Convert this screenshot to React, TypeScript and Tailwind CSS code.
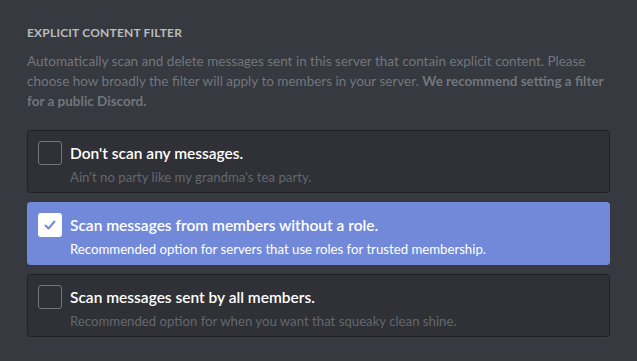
import React, { useState } from 'react';

interface FilterOption {
  id: string;
  title: string;
  description: string;
}

const options: FilterOption[] = [
  {
    id: 'none',
    title: "Don't scan any messages.",
    description: "Ain't no party like my grandma's tea party.",
  },
  {
    id: 'no-role',
    title: 'Scan messages from members without a role.',
    description: 'Recommended option for servers that use roles for trusted membership.',
  },
  {
    id: 'all',
    title: 'Scan messages sent by all members.',
    description: 'Recommended option for when you want that squeaky clean shine.',
  },
];

const Checkbox: React.FC<{ checked: boolean }> = ({ checked }) => (
  <div
    className={`w-6 h-6 shrink-0 rounded-[3px] flex items-center justify-center ${
      checked ? 'bg-white' : 'border border-[#72767d]'
    }`}
  >
    {checked && (
      <svg width="14" height="14" viewBox="0 0 14 14" fill="none">
        <polyline
          points="2.5,7.5 5.5,10.5 11.5,3.5"
          stroke="#7289da"
          strokeWidth="2"
          strokeLinecap="round"
          strokeLinejoin="round"
        />
      </svg>
    )}
  </div>
);

const App: React.FC = () => {
  const [selected, setSelected] = useState<string>('no-role');

  return (
    <div
      className="w-[637px] h-[361px] bg-[#36393f] px-[27px] pt-[25px]"
      style={{ fontFamily: 'Lato, "Open Sans", sans-serif' }}
    >
      <h5 className="text-[12px] leading-4 font-bold uppercase tracking-[0.2px] text-[#b9bbbe]">
        Explicit Content Filter
      </h5>
      <p className="mt-[10px] text-[13.5px] leading-5 text-[#72767d]">
        Automatically scan and delete messages sent in this server that contain explicit content. Please
        <br />
        choose how broadly the filter will apply to members in your server.{' '}
        <strong className="font-bold">
          We recommend setting a filter
          <br />
          for a public Discord.
        </strong>
      </p>

      <div className="mt-[19px] flex flex-col gap-[9px]">
        {options.map((opt) => {
          const isChecked = selected === opt.id;
          return (
            <div
              key={opt.id}
              onClick={() => setSelected(opt.id)}
              className={`h-[63px] rounded-[3px] border flex items-start gap-2 px-[10px] pt-[10px] cursor-pointer ${
                isChecked ? 'bg-[#7289da] border-[#7289da]' : 'bg-[#2f3136] border-[#202225]'
              }`}
            >
              <Checkbox checked={isChecked} />
              <div className="flex flex-col">
                <div className="text-[15.5px] leading-6 font-semibold text-white">{opt.title}</div>
                <div
                  className={`mt-[2px] text-[13.2px] leading-5 ${
                    isChecked ? 'text-white' : 'text-[#64676d]'
                  }`}
                >
                  {opt.description}
                </div>
              </div>
            </div>
          );
        })}
      </div>
    </div>
  );
};

export default App;
